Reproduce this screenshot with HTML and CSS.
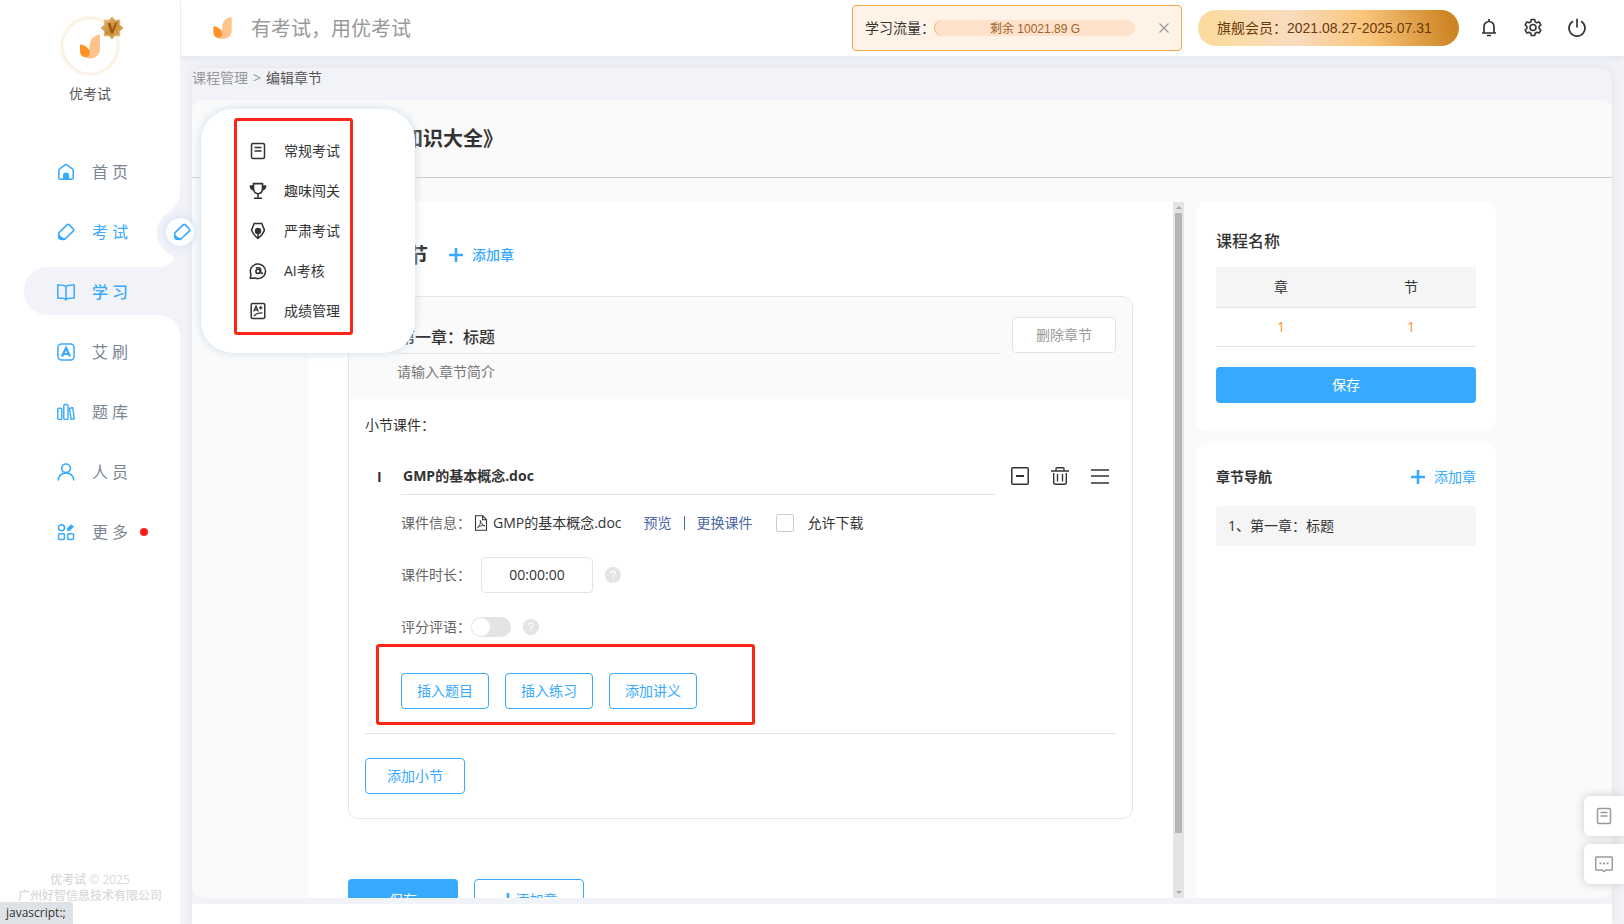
FILE: index.html
```html
<!DOCTYPE html>
<html lang="zh-CN">
<head>
<meta charset="utf-8">
<title>编辑章节</title>
<link rel="stylesheet" href="styles.css">
</head>
<body>
<svg class="sprite" aria-hidden="true">
  <symbol id="logo" viewBox="0 0 20 24">
    <path d="M20 0v14.500C20 20 16 24 10.500 24 6 24 2 22.500 0 19c6 2 10-1 9.500-6C9.500 5.500 13 1 20 0z" fill="#ffc48c"/>
    <path d="M0 10c6 .5 10 4.500 9.800 8.500C9.600 21 8 22.500 5.500 22.500 1.500 22.500 0 19 0 16z" fill="#ff9227"/>
  </symbol>
  <symbol id="eraser" viewBox="0 0 18 18">
    <path d="M10 1.900 L2.300 9.400 Q1.500 10.200 1.600 11.300 L1.800 14.300 Q2 16 3.600 16.200 L6.400 16.400 Q7.500 16.500 8.300 15.700 L16.200 8.200 Q17.200 7.100 16.200 6 L12.500 1.900 Q11.300 .8 10 1.900z" fill="none" stroke="currentColor" stroke-width="1.600"/>
    <path d="M1.500 10c1 2.800 3.300 4.900 7 5.300-1.500 1.700-3.800 1.700-5.500 1-1.500-1-1.900-3.700-1.500-6.300z" fill="currentColor"/>
  </symbol>
  <symbol id="doc" viewBox="0 0 18 18">
    <rect x="2.500" y="1.500" width="13" height="15" rx="1.500" fill="none" stroke="currentColor" stroke-width="1.500"/>
    <path d="M5.500 5.500h7M5.500 9h7" stroke="currentColor" stroke-width="1.500"/>
  </symbol>
  <symbol id="plus" viewBox="0 0 14 14"><path d="M7 0v14M0 7h14" stroke="currentColor" stroke-width="2.600"/></symbol>
  <symbol id="help" viewBox="0 0 16 16">
    <circle cx="8" cy="8" r="8" fill="#e4e4e4"/>
    <path d="M5.800 6.300c0-3 4.400-3 4.400-.2 0 1.500-2.200 1.700-2.200 3.400M8 11.200v1.300" fill="none" stroke="#fff" stroke-width="1.200"/>
  </symbol>
</svg>

<aside class="sidebar">
  <svg class="sidebar-shape" width="180" height="150" viewBox="0 0 180 150" aria-hidden="true">
    <path d="M180 0C180 14 173 19 166 24A24 24 0 0 0 166 62C171 65 173 66 175.500 69C171 74 166 77 158 77H48a24 24 0 0 0 0 48H157C168 125 177 132 180 143z" fill="#f2f3f8"/>
  </svg>
  <div class="profile">
    <div class="avatar">
      <svg class="avatar-logo"><use href="#logo"/></svg>
      <svg class="badge" viewBox="0 0 24 24">
        <defs><linearGradient id="gold" x1="0" y1="0" x2="1" y2="1"><stop offset="0" stop-color="#e9c689"/><stop offset=".5" stop-color="#c98f3d"/><stop offset="1" stop-color="#d8ab5e"/></linearGradient></defs>
        <path d="M12 .8l3 3.600 4.900-.4-.4 4.800L23.200 12l-3.700 3.200.4 4.800-4.900-.4-3 3.600-3-3.600-4.900.4.4-4.800L.8 12l3.700-3.200L4.100 4l4.900.4z" fill="url(#gold)" stroke="#e3bd7b" stroke-width="1"/>
        <path d="M7.500 7h3l1.800 6.500L15 7h2l-4 10.500h-2z" fill="#9a5b0e"/>
      </svg>
    </div>
    <div class="profile-name">优考试</div>
  </div>
  <nav class="nav">
    <a href="#"><svg viewBox="0 0 18 18"><path d="M1.800 7.400 Q1.800 6.500 2.600 5.900 L8 1.800 Q9 1.100 10 1.800 L15.400 5.900 Q16.200 6.500 16.200 7.400 V14.800 Q16.200 16.300 14.700 16.300 H3.300 Q1.800 16.300 1.800 14.800z" fill="none" stroke="currentColor" stroke-width="1.500"/><path d="M6 16.500V12.600a3 3 0 0 1 6 0v3.900z" fill="currentColor"/></svg><span>首页</span></a>
    <a href="#" class="hover"><svg><use href="#eraser"/></svg><span>考试</span></a>
    <a href="#" class="active"><svg viewBox="0 0 18 18"><path d="M9 3.500C7.500 2 5 1.800.8 1.900v13.200C5 15 7.500 15 9 16.700 10.500 15 13 15 17.200 15.100V1.900C13 1.800 10.500 2 9 3.500zV16" fill="none" stroke="currentColor" stroke-width="1.500"/></svg><span>学习</span></a>
    <a href="#"><svg viewBox="0 0 18 18"><rect x=".9" y=".9" width="16.200" height="16.200" rx="3.500" fill="none" stroke="currentColor" stroke-width="1.500"/><path d="M5 13.500L9 4.800l4 8.700M6.500 11h5" fill="none" stroke="currentColor" stroke-width="2.200"/></svg><span>艾刷</span></a>
    <a href="#"><svg viewBox="0 0 18 18"><g fill="none" stroke="currentColor" stroke-width="1.400"><rect x=".8" y="5.200" width="4" height="11.200" rx="1"/><rect x="6.800" y="1.500" width="4.200" height="14.900" rx="1"/><path d="M12.500 5.300l3.200-.5 1.600 11-3.200.5z" stroke-linejoin="round"/></g></svg><span>题库</span></a>
    <a href="#"><svg viewBox="0 0 18 18"><g fill="none" stroke="currentColor" stroke-width="1.600"><circle cx="9" cy="5.300" r="4.300"/><path d="M1.200 17.500c.5-5 3.600-7.500 7.800-7.500s7.300 2.500 7.800 7.500"/></g></svg><span>人员</span></a>
    <a href="#"><svg viewBox="0 0 18 18"><g fill="none" stroke="currentColor" stroke-width="1.500"><circle cx="4.500" cy="4.700" r="3"/><rect x="1.600" y="10.700" width="5.800" height="5.800" rx="1"/><rect x="10.700" y="10.700" width="5.800" height="5.800" rx="1"/></g><path d="M14.200 1.300l2.800 2.300-3.800 4-3.200.7.200-3z" fill="currentColor"/></svg><span>更多</span><i class="dot"></i></a>
  </nav>
  <div class="knob"><svg><use href="#eraser"/></svg></div>
  <footer class="copyright">优考试 © 2025<br>广州好智信息技术有限公司</footer>
  <div class="submenu">
    <div class="submenu-list">
      <a href="#"><svg><use href="#doc"/></svg>常规考试</a>
      <a href="#"><svg viewBox="0 0 18 18"><path d="M4.500 1.600h9V6c0 3.600-2 5.700-4.500 5.700S4.500 9.600 4.500 6zM9 11.700V16M5 16.200h8" fill="none" stroke="currentColor" stroke-width="1.600"/><path d="M4.500 3.200H.8C.3 6 2 8.300 4.900 8.500zM13.500 3.200h3.700c.5 2.800-1.200 5.100-4.100 5.300z" fill="currentColor"/></svg>趣味闯关</a>
      <a href="#"><svg viewBox="0 0 18 18"><path d="M5.200 1.400h7.600l2.700 6.700c-1.200 3.500-3.500 6-6.500 8.300-3-2.300-5.300-4.800-6.500-8.300z" fill="none" stroke="currentColor" stroke-width="1.500"/><circle cx="9" cy="9" r="3.200" fill="currentColor"/><path d="M9 9v8" stroke="currentColor" stroke-width="1.500"/></svg>严肃考试</a>
      <a href="#"><svg viewBox="0 0 18 18"><path d="M1.200 16.200L2 12.300A7.600 7.300 0 1 1 6 16z" fill="none" stroke="currentColor" stroke-width="1.500" stroke-linejoin="round"/><circle cx="9" cy="9.300" r="2.100" fill="none" stroke="currentColor" stroke-width="1.600"/><path d="M6.800 6c3.500-1 5 .2 5 2.300v2.200c0 1.300 1.600 1.300 1.900 0" fill="none" stroke="currentColor" stroke-width="1.500"/></svg>AI考核</a>
      <a href="#"><svg viewBox="0 0 18 18"><rect x="2.200" y="1.500" width="13.600" height="15" rx="1.500" fill="none" stroke="currentColor" stroke-width="1.500"/><path d="M4.700 9.500l2.300-5.300 2.300 5.300M5.500 7.900h3M11.700 4v3.600M10 5.800h3.500M5 14.300c1.500-2.800 5-3.600 8.500-3.500" fill="none" stroke="currentColor" stroke-width="1.300"/></svg>成绩管理</a>
    </div>
  </div>
</aside>

<div class="main">
  <header class="topbar">
    <svg class="brand-logo"><use href="#logo"/></svg>
    <div class="slogan">有考试，用优考试</div>
    <div class="quota">
      <span>学习流量：</span>
      <div class="quota-bar">剩余 10021.89 G</div>
      <button type="button" class="quota-close" aria-label="关闭"><svg viewBox="0 0 10 10"><path d="M.5.5l9 9M9.500.5l-9 9" stroke="currentColor" stroke-width="1.100"/></svg></button>
    </div>
    <div class="member">旗舰会员：2021.08.27-2025.07.31</div>
    <div class="tools">
      <button type="button" aria-label="通知"><svg viewBox="0 0 20 20"><path d="M5 14.800V8.500a5 5 0 0 1 10 0v6.300M3 15h14M8 17.500h4M10 1v2.500" fill="none" stroke="currentColor" stroke-width="1.700"/></svg></button>
      <button type="button" aria-label="设置"><svg viewBox="0 0 20 20"><path d="M8.300 1.500h3.400l.5 2.300 1.600.9 2.300-.8 1.700 3-1.700 1.600v1.900l1.700 1.600-1.700 3-2.300-.8-1.600 1-.5 2.300H8.300l-.5-2.300-1.600-1-2.300.8-1.700-3 1.700-1.600V8.500L2.200 6.900l1.700-3 2.300.8 1.600-.9z" fill="none" stroke="currentColor" stroke-width="1.600" stroke-linejoin="round"/><circle cx="10" cy="9.500" r="3" fill="none" stroke="currentColor" stroke-width="1.600"/></svg></button>
      <button type="button" aria-label="退出"><svg viewBox="0 0 20 20"><path d="M6 3.200a8 8 0 1 0 8 0M10 .8v8.700" fill="none" stroke="currentColor" stroke-width="1.700"/></svg></button>
    </div>
  </header>

  <div class="page">
    <div class="crumbs"><a href="#">课程管理</a><span>&gt;</span><b>编辑章节</b></div>
    <div class="workspace">
      <h1>《GMP知识大全》</h1>
      <div class="columns">
        <div class="editor">
          <div class="editor-body">
            <div class="section-head"><h2>编辑章节</h2><button type="button" class="add-link strong"><svg><use href="#plus"/></svg>添加章</button></div>
            <section class="chapter">
              <div class="chapter-head">
                <div class="chapter-fields">
                  <input class="chapter-title" value="第一章：标题" aria-label="章标题">
                  <input class="chapter-intro" placeholder="请输入章节简介" aria-label="章节简介">
                </div>
                <button type="button" class="btn muted">删除章节</button>
              </div>
              <div class="chapter-body">
                <div class="caption">小节课件：</div>
                <div class="lesson">
                  <div class="lesson-head">
                    <span class="index">I</span>
                    <input class="lesson-title" value="GMP的基本概念.doc" aria-label="小节标题">
                    <div class="lesson-actions">
                      <button type="button" aria-label="收起"><svg viewBox="0 0 18 18"><rect x=".8" y=".8" width="16.400" height="16.400" rx="1" fill="none" stroke="currentColor" stroke-width="1.500"/><path d="M5 9h8" stroke="currentColor" stroke-width="1.800"/></svg></button>
                      <button type="button" aria-label="删除"><svg viewBox="0 0 18 18"><path d="M0 4h18M5 3.800V1.700Q5 .8 6 .8h6q1 0 1 .9v2.100M2.700 6v9.800q0 1.400 1.400 1.400h9.800q1.400 0 1.400-1.400V6M6.500 7v7.500M11.500 7v7.500" fill="none" stroke="currentColor" stroke-width="1.400"/></svg></button>
                      <button type="button" aria-label="排序"><svg viewBox="0 0 18 18"><path d="M0 3h18M0 9h18M0 16h18" stroke="currentColor" stroke-width="1.500"/></svg></button>
                    </div>
                  </div>
                  <div class="lesson-body">
                    <div class="row">
                      <span class="label">课件信息：</span>
                      <svg class="pdf" viewBox="0 0 14 16"><path d="M1.500.8h7.300l3.700 3.800v10.600h-11zM8.600.8v4h4" fill="none" stroke="currentColor" stroke-width="1.100"/><path d="M6.300 5.500c1 3 2 4.500 4.500 5.300-2.500-.6-5 .1-7.300 1.800C5.700 11 6.800 8.500 6.300 5.500z" fill="none" stroke="currentColor" stroke-width=".9"/></svg>
                      <span class="file">GMP的基本概念.doc</span>
                      <a href="#" class="link">预览</a><i class="bar"></i><a href="#" class="link">更换课件</a>
                      <label class="check"><input type="checkbox">允许下载</label>
                    </div>
                    <div class="row">
                      <label class="label" for="duration">课件时长：</label>
                      <input id="duration" class="duration" value="00:00:00">
                      <svg class="help"><use href="#help"/></svg>
                    </div>
                    <div class="row">
                      <label class="label" for="comment">评分评语：</label>
                      <input type="checkbox" role="switch" id="comment" class="switch">
                      <svg class="help"><use href="#help"/></svg>
                    </div>
                    <div class="inserts">
                      <button type="button" class="btn outline">插入题目</button>
                      <button type="button" class="btn outline">插入练习</button>
                      <button type="button" class="btn outline">添加讲义</button>
                    </div>
                  </div>
                </div>
                <button type="button" class="btn outline add-lesson">添加小节</button>
              </div>
            </section>
            <div class="editor-foot">
              <button type="button" class="btn primary">保存</button>
              <button type="button" class="btn outline"><svg><use href="#plus"/></svg>添加章</button>
            </div>
          </div>
          <div class="scrollbar" aria-hidden="true"><i class="arrow up"></i><i class="thumb"></i><i class="arrow down"></i></div>
        </div>
        <div class="side">
          <section class="panel">
            <h3>课程名称</h3>
            <table>
              <thead><tr><th>章</th><th>节</th></tr></thead>
              <tbody><tr><td>1</td><td>1</td></tr></tbody>
            </table>
            <button type="button" class="btn primary">保存</button>
          </section>
          <section class="panel outline-panel">
            <div class="outline-head"><h4>章节导航</h4><button type="button" class="add-link"><svg><use href="#plus"/></svg>添加章</button></div>
            <a href="#" class="outline-item">1、第一章：标题</a>
          </section>
        </div>
      </div>
    </div>
    <div class="page-foot"></div>
  </div>
</div>

<div class="float-tools">
  <button type="button" aria-label="文档"><svg><use href="#doc"/></svg></button>
  <button type="button" aria-label="留言"><svg viewBox="0 0 18 18"><path d="M1.500 2h15q.8 0 .8.800v11.400q0 .8-.8.800H11l-2 1.600L7 15H1.500q-.8 0-.8-.8V2.800Q.7 2 1.500 2z" fill="none" stroke="currentColor" stroke-width="1.400"/><path d="M4.500 8.300h2M8 8.300h2M11.500 8.300h2" stroke="currentColor" stroke-width="1.800"/></svg></button>
</div>
<div class="status">javascript:;</div>
</body>
</html>
```

FILE: styles.css
```css
* { box-sizing: border-box; }
body {
  margin: 0;
  height: 100vh;
  display: flex;
  overflow: hidden;
  background: #f2f3f8;
  color: #333;
  font: 14px/20px "Open Sans", "Noto Sans CJK SC", sans-serif;
}
a { color: inherit; text-decoration: none; }
button, input { font: inherit; color: inherit; }
button { padding: 0; border: 0; background: none; cursor: pointer; }
input { margin: 0; border: 0; padding: 0; background: none; outline: 0; min-width: 0; }
svg { flex: none; display: block; }
h1, h2, h3, h4 { margin: 0; }
.sprite { position: absolute; width: 0; height: 0; }

/* Sidebar */
.sidebar {
  position: relative;
  z-index: 2;
  flex: none;
  width: 180px;
  display: flex;
  flex-direction: column;
  background: #fff;
}
.sidebar-shape { position: absolute; top: 190px; left: 0; }
.profile { padding-top: 16px; display: flex; flex-direction: column; align-items: center; }
.avatar {
  position: relative;
  width: 60px;
  height: 60px;
  border: 2px solid #fbf5ea;
  border-radius: 50%;
  box-shadow: inset 0 0 0 1px #f7e8cf;
  display: grid;
  place-items: center;
}
.avatar-logo { width: 20px; height: 25px; }
.badge { position: absolute; top: -2px; right: -6px; width: 24px; height: 24px; }
.profile-name { margin-top: 8px; color: #555; }
.nav { position: relative; margin-top: 38px; display: flex; flex-direction: column; }
.nav a {
  height: 60px;
  padding-left: 57px;
  display: flex;
  align-items: center;
  color: #7b8694;
  font-size: 16px;
}
.nav svg { width: 18px; height: 18px; color: #37a9ff; margin-right: 17px; }
.nav span { padding-bottom: 1px; letter-spacing: 4px; }
.nav .hover, .nav .active { color: #37a9ff; }
.nav .active { font-weight: 500; }
.dot { width: 8px; height: 8px; margin-left: 8px; border-radius: 50%; background: #ff1f1f; }
.knob {
  position: absolute;
  top: 218px;
  right: -14px;
  width: 28px;
  height: 28px;
  padding-left: 3px;
  border-radius: 50%;
  background: #fff;
  box-shadow: 0 0 10px #c4dcef;
  color: #37a9ff;
  display: grid;
  place-items: center;
}
.knob svg { width: 18px; height: 18px; }
.copyright {
  margin-top: auto;
  padding-bottom: 20px;
  text-align: center;
  font-size: 12px;
  line-height: 16px;
  font-weight: 500;
  color: #d9d9d9;
}
.submenu {
  position: absolute;
  left: 201px;
  top: 109px;
  padding: 9px 62px 18px 33px;
  border-radius: 32px;
  background: #fff;
  box-shadow: 0 0 10px #c9dcea;
}
.submenu-list {
  width: 119px;
  border: 3px solid #ff2516;
  border-radius: 3px;
  padding: 10px 0 1px;
}
.submenu a { height: 40px; padding-left: 12px; display: flex; align-items: center; gap: 17px; white-space: nowrap; }
.submenu svg { width: 18px; height: 18px; }

/* Top bar */
.main { flex: 1; min-width: 0; display: flex; flex-direction: column; }
.topbar {
  flex: none;
  height: 56px;
  margin-left: 1px;
  padding-left: 32px;
  padding-right: 37px;
  display: flex;
  align-items: center;
  background: #fff;
  box-shadow: 0 2px 8px #e2e4ec;
}
.brand-logo { width: 19px; height: 22px; }
.slogan { margin-left: 19px; padding-top: 2px; font-size: 20px; line-height: 30px; color: #999; }
.quota {
  margin-left: auto;
  width: 330px;
  height: 46px;
  padding: 0 12px;
  display: flex;
  align-items: center;
  border: 1px solid #f8a44e;
  border-radius: 4px;
  background: #fff2e6;
}
.quota-bar {
  width: 200px;
  height: 16px;
  border-radius: 8px;
  background: #ffe2cb;
  box-shadow: -1px 0 0 #f3b277;
  text-align: center;
  color: #a0622a;
  font: 12px/18px "Liberation Sans", "Noto Sans CJK SC", sans-serif;
}
.quota-close { margin-left: auto; color: #999; }
.quota-close svg { width: 10px; height: 10px; }
.member {
  margin-left: 16px;
  width: 261px;
  height: 36px;
  padding-left: 19px;
  border-radius: 18px;
  background: linear-gradient(75deg, #fcdba0 8%, #f9dcc0 36%, #f9c57c 64%, #cd8422 96%);
  color: #6b3a0a;
  font: 14px/37px "Liberation Sans", "Noto Sans CJK SC", sans-serif;
}
.tools { margin-left: 20px; display: flex; gap: 24px; }
.tools svg { width: 20px; height: 20px; }

/* Page */
.page {
  flex: 1;
  min-height: 0;
  margin: 12px 12px 0;
  display: flex;
  flex-direction: column;
  border-radius: 10px 10px 0 0;
  box-shadow: 0 0 8px #e0e2ea;
}
.crumbs { height: 32px; display: flex; gap: 5px; color: #999; }
.crumbs b { font-weight: inherit; color: #555; }
.workspace {
  flex: 1;
  min-height: 0;
  display: flex;
  flex-direction: column;
  overflow: hidden;
  border-radius: 10px;
  background: #fafafa;
}
h1 {
  height: 78px;
  padding-left: 145px;
  border-bottom: 1px solid #ccc;
  font-size: 20px;
  line-height: 78px;
}
.columns {
  flex: 1;
  min-height: 0;
  width: 100%;
  max-width: 1188px;
  margin: 24px auto 0;
  display: flex;
  gap: 12px;
}
.page-foot { height: 20px; margin-top: 6px; background: #fff; }

.editor { flex: 1; min-width: 0; display: flex; background: #fff; overflow: hidden; }
.editor-body { flex: 1; min-width: 0; padding: 36px 40px 0; }
.scrollbar {
  width: 11px;
  padding: 4px 2px;
  display: flex;
  flex-direction: column;
  align-items: center;
  background: #e4e4e4;
}
.thumb { width: 7px; height: 620px; margin: 4px 0 auto; background: #b6b6b6; }
.arrow { border: 3px solid transparent; width: 0; height: 0; }
.arrow.up { border-top: 0; border-bottom-color: #aaa; }
.arrow.down { border-bottom: 0; border-top-color: #aaa; }

.section-head { height: 34px; margin-bottom: 24px; display: flex; align-items: center; gap: 21px; }
h2 { padding-top: 2px; font-size: 20px; line-height: 34px; }
.add-link { display: flex; align-items: center; gap: 9px; color: #37a9ff; }
.add-link.strong { font-weight: 500; }
.add-link svg { width: 14px; height: 14px; }

.btn {
  height: 36px;
  border: 1px solid transparent;
  border-radius: 4px;
  display: flex;
  align-items: center;
  justify-content: center;
}
.btn.outline { border-color: #37a9ff; color: #37a9ff; background: #fff; }
.btn.primary { background: #37a9ff; color: #fff; }
.btn.muted { width: 104px; border-color: #e4e4e4; color: #999; background: #fff; }

.chapter { border: 1px solid #e6e6e6; border-radius: 10px; overflow: hidden; }
.chapter-head { padding: 20px 16px 9px 48px; display: flex; gap: 12px; background: #fafafa; }
.chapter-fields { flex: 1; display: flex; flex-direction: column; }
.chapter-title {
  height: 37px;
  padding: 1px 2px 0;
  border-bottom: 1px solid #e4e4e4;
  font-size: 16px;
  font-weight: 500;
}
.chapter-intro { height: 36px; padding-bottom: 2px; }
.chapter-intro::placeholder { color: #757575; opacity: 1; }
.chapter-body { padding: 16px 16px 24px; }
.lesson { padding: 24px 0; margin-bottom: 24px; border-bottom: 1px solid #e4e4e4; }
.lesson-head { display: flex; align-items: center; }
.index { width: 36px; padding-left: 12px; font-weight: 700; }
.lesson-title { flex: 1; height: 36px; padding: 0 2px 3px; border-bottom: 1px solid #e4e4e4; font-weight: 700; }
.lesson-actions { margin: 0 7px 0 15px; padding-bottom: 2px; display: flex; gap: 22px; }
.lesson-actions svg { width: 18px; height: 18px; }
.lesson-body { margin-top: 10px; padding-left: 36px; display: flex; flex-direction: column; gap: 16px; }
.row { height: 36px; display: flex; align-items: center; }
.label { width: 70px; color: #666; }
.pdf { width: 14px; height: 16px; margin: 0 5px 0 3px; }
.link { color: #4a67a3; }
.file { margin-right: 22px; }
.bar { width: 1px; height: 14px; margin: 0 12px; background: #4a67a3; }
.check { margin-left: 23px; display: flex; align-items: center; gap: 14px; }
.check input { appearance: none; width: 18px; height: 18px; border: 1px solid #ccc; border-radius: 2px; background: #fff; }
.duration { width: 112px; height: 36px; margin-left: 10px; padding-bottom: 2px; border: 1px solid #e4e4e4; border-radius: 4px; text-align: center; }
.help { width: 16px; height: 16px; margin-left: 12px; }
.switch { appearance: none; width: 40px; height: 20px; padding: 1px; border-radius: 10px; background: #e4e4e4; }
.switch::before { content: ""; display: block; width: 18px; height: 18px; border-radius: 50%; background: #fff; }
.inserts { position: relative; align-self: flex-start; margin-top: 12px; display: flex; gap: 16px; }
.inserts::before {
  content: "";
  position: absolute;
  inset: -29px -58px -16px -25px;
  border: 3px solid #ff2516;
  border-radius: 3px;
  pointer-events: none;
}
.inserts .btn { width: 88px; }
.add-lesson { width: 100px; }
.editor-foot { margin-top: 60px; display: flex; gap: 16px; }
.editor-foot .btn { width: 110px; padding-top: 5px; gap: 1px; }
.editor-foot svg { width: 14px; height: 14px; }

/* Right column */
.side { flex: none; width: 300px; display: flex; flex-direction: column; gap: 12px; }
.panel { padding: 27px 20px 28px; border-radius: 10px; background: #fff; }
h3 { font-size: 16px; line-height: 24px; font-weight: 500; }
table { width: 100%; margin: 14px 0 20px; border-collapse: collapse; table-layout: fixed; text-align: center; }
th { height: 40px; padding: 0; font-weight: inherit; background: #f5f5f5; border-bottom: 1px solid #e4e4e4; }
td { height: 39px; padding: 0; color: #f7902f; border-bottom: 1px solid #e4e4e4; }
.panel > .btn { width: 100%; }
.outline-panel { flex: 1; padding-top: 24px; border-radius: 10px 10px 0 0; }
.outline-head { display: flex; justify-content: space-between; align-items: center; }
h4 { font-size: 14px; font-weight: 600; }
.outline-item { display: block; margin-top: 19px; padding: 10px 12px; border-radius: 4px; background: #f5f5f5; }

/* Overlays */
.float-tools { position: fixed; right: 0; bottom: 40px; z-index: 3; display: flex; flex-direction: column; gap: 8px; }
.float-tools button {
  width: 40px;
  height: 40px;
  border-radius: 6px 0 0 6px;
  background: #fff;
  box-shadow: 0 0 10px #ccc;
  color: #999;
  display: grid;
  place-items: center;
}
.float-tools svg { width: 18px; height: 18px; }
.status {
  position: fixed;
  left: 0;
  bottom: 0;
  z-index: 4;
  padding: 0 7px 0 6px;
  border-radius: 0 3px 0 0;
  background: #dee1e6;
  font-size: 12px;
  line-height: 22px;
}
```
